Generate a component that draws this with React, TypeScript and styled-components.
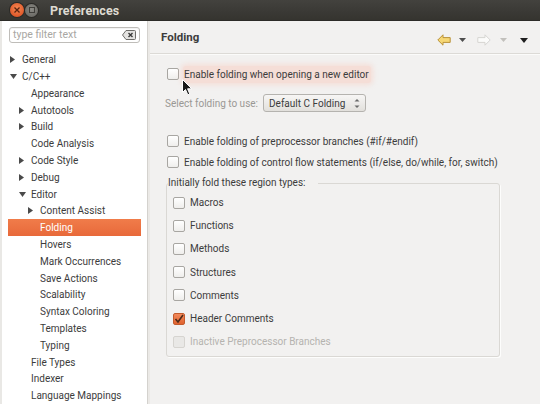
import React from "react";
import styled, { createGlobalStyle } from "styled-components";

const GlobalStyle = createGlobalStyle`
  html, body { margin: 0; padding: 0; }
  body {
    background: #f2f1f0;
    font-family: Roboto, "Liberation Sans", sans-serif;
    font-size: 10px;
    color: #3c3c3c;
  }
  * { box-sizing: border-box; }
`;

const Window = styled.div`
  width: 540px;
  height: 404px;
  display: flex;
  flex-direction: column;
  overflow: hidden;
  position: relative;
  background: #f2f1f0;
`;

const TitleBar = styled.div`
  height: 21px;
  flex: none;
  display: flex;
  align-items: center;
  padding-left: 10px;
  background: linear-gradient(#43423e, #3a3935 60%, #35342f);
  border-bottom: 1px solid #2c2b28;
`;

const CloseBtn = styled.div`
  width: 14px;
  height: 14px;
  border-radius: 50%;
  background: radial-gradient(circle at 50% 40%, #f88a55, #e0592a 70%, #b8431c);
  box-shadow: 0 0 0 1px #2a2926;
  display: flex;
  align-items: center;
  justify-content: center;
`;

const MinBtn = styled.div`
  width: 13px;
  height: 13px;
  border-radius: 50%;
  margin-left: 1px;
  background: radial-gradient(circle at 50% 40%, #8a8984, #6d6c67 70%, #5a5955);
  box-shadow: 0 0 0 1px #2a2926;
  display: flex;
  align-items: center;
  justify-content: center;
`;

const Title = styled.div`
  margin-left: 12px;
  font-weight: bold;
  font-size: 12.5px;
  color: #dfdbd2;
  letter-spacing: 0.1px;
`;

const Body = styled.div`
  flex: 1;
  display: flex;
  min-height: 0;
`;

const Sidebar = styled.div`
  width: 148px;
  flex: none;
  background: #fff;
  border-left: 2px solid #e9e8e5;
  border-right: 1px solid #d4d2ce;
  padding-top: 6px;
  display: flex;
  flex-direction: column;
`;

const Filter = styled.div`
  margin: 0 7px 0 7px;
  height: 18px;
  border: 1px solid #bfbdb9;
  border-radius: 3px;
  box-shadow: inset 0 1px 1px rgba(0, 0, 0, 0.06);
  display: flex;
  align-items: center;
  padding: 0 3px 0 3px;
  color: #a9a7a3;
  font-size: 10.5px;
`;

const FilterText = styled.span`
  flex: 1;
`;

const Tree = styled.div`
  margin-top: 8.6px;
  display: flex;
  flex-direction: column;
`;

const Row = styled.div<{ $level: number; $selected?: boolean }>`
  height: 16.8px;
  margin-left: 6px;
  width: 133px;
  display: flex;
  align-items: center;
  padding-left: ${(p) => 1 + p.$level * 9}px;
  white-space: nowrap;
  font-size: 10px;
  color: ${(p) => (p.$selected ? "#fff" : "#3c3c3c")};
  background: ${(p) =>
    p.$selected ? "linear-gradient(#f07c4a, #e8693a)" : "transparent"};
`;

const Expander = styled.span`
  width: 13px;
  flex: none;
  display: flex;
  align-items: center;
  padding-left: 1px;
`;

const Sash = styled.div`
  width: 2px;
  flex: none;
  background: #ebe9e6;
`;

const Main = styled.div`
  flex: 1;
  display: flex;
  flex-direction: column;
  position: relative;
`;

const Header = styled.div`
  height: 33px;
  flex: none;
  display: flex;
  align-items: center;
  padding-left: 11px;
  padding-right: 12px;
  border-bottom: 1px solid #dcdad6;
  box-shadow: 0 1px 0 #fbfbfa;
`;

const Heading = styled.div`
  font-weight: bold;
  font-size: 11.5px;
  color: #3c3c3c;
  flex: 1;
  margin-top: -1px;
`;

const Tools = styled.div`
  display: flex;
  align-items: center;
  margin-top: 6px;
`;

const ToolIcon = styled.span<{ $gap: number }>`
  display: flex;
  margin-left: ${(p) => p.$gap}px;
`;

const Content = styled.div`
  padding: 10px 0 0 17px;
  display: flex;
  flex-direction: column;
`;

const CheckRow = styled.div<{ $mt?: number }>`
  height: 20px;
  display: flex;
  align-items: center;
  margin-top: ${(p) => p.$mt ?? 0}px;
  font-size: 10px;
`;

const Label = styled.span<{ $disabled?: boolean; $focus?: boolean }>`
  margin-left: 5px;
  white-space: nowrap;
  color: ${(p) => (p.$disabled ? "#b5b3af" : "#3c3c3c")};
  ${(p) =>
    p.$focus
      ? `background: rgba(250, 195, 180, 0.42);
         box-shadow: 0 0 5px 2px rgba(250, 195, 180, 0.4);
         padding: 3px 2px 3px 1px;
         margin-left: 4px;
         border-radius: 3px;`
      : ""}
`;

const Box = styled.span<{ $checked?: boolean; $disabled?: boolean }>`
  width: 12px;
  height: 12px;
  flex: none;
  border-radius: 2px;
  display: flex;
  align-items: center;
  justify-content: center;
  border: 1px solid
    ${(p) => (p.$checked ? "#c35b2d" : p.$disabled ? "#d6d4d0" : "#a8a6a2")};
  background: ${(p) =>
    p.$checked
      ? "linear-gradient(#f28a5c, #e0622f)"
      : p.$disabled
      ? "#e9e8e6"
      : "linear-gradient(#ffffff, #efeeec)"};
`;

const SelectRow = styled.div`
  height: 18px;
  margin-top: 10px;
  margin-left: -2px;
  display: flex;
  align-items: center;
  font-size: 10px;
`;

const SelectLabel = styled.span`
  color: #9a9894;
  white-space: nowrap;
`;

const Combo = styled.div`
  margin-left: 5px;
  width: 103px;
  height: 18px;
  border: 1px solid #b5b3af;
  border-radius: 3px;
  background: linear-gradient(#f7f6f5, #e2e0dc);
  display: flex;
  align-items: center;
  padding: 0 5px;
  color: #3c3c3c;
`;

const ComboText = styled.span`
  flex: 1;
  white-space: nowrap;
`;

const Group = styled.fieldset`
  margin: 3px 0 0 -1px;
  width: 334px;
  padding: 0 0 3px 0;
  border: 1px solid #dad8d4;
  border-radius: 3px;
  box-shadow: 1px 1px 0 #fdfdfc;
  min-width: 0;
`;

const Legend = styled.legend`
  margin-left: 1px;
  padding: 0 12px 0 0;
  font-size: 10px;
  color: #3c3c3c;
  line-height: 16px;
`;

const GroupItem = styled.div`
  height: 23.2px;
  display: flex;
  align-items: center;
  padding-left: 6px;
  font-size: 10px;
`;

const Cursor = styled.svg`
  position: absolute;
  left: 32px;
  top: 58px;
`;

const Triangle = ({ dir, color = "#4a4a4a" }: { dir: "right" | "down"; color?: string }) =>
  dir === "right" ? (
    <svg width="5" height="7" viewBox="0 0 5 7">
      <path d="M0 0 L5 3.5 L0 7 Z" fill={color} />
    </svg>
  ) : (
    <svg width="7" height="5" viewBox="0 0 7 5">
      <path d="M0 0 L7 0 L3.5 5 Z" fill={color} />
    </svg>
  );

const Check = () => (
  <svg width="10" height="10" viewBox="0 0 10 10">
    <path d="M1.5 5 L4 8 L9 1" stroke="#4b2a19" strokeWidth="1.6" fill="none" />
  </svg>
);

type Node = { label: string; level: number; arrow?: "right" | "down"; selected?: boolean };

const tree: Node[] = [
  { label: "General", level: 0, arrow: "right" },
  { label: "C/C++", level: 0, arrow: "down" },
  { label: "Appearance", level: 1 },
  { label: "Autotools", level: 1, arrow: "right" },
  { label: "Build", level: 1, arrow: "right" },
  { label: "Code Analysis", level: 1 },
  { label: "Code Style", level: 1, arrow: "right" },
  { label: "Debug", level: 1, arrow: "right" },
  { label: "Editor", level: 1, arrow: "down" },
  { label: "Content Assist", level: 2, arrow: "right" },
  { label: "Folding", level: 2, selected: true },
  { label: "Hovers", level: 2 },
  { label: "Mark Occurrences", level: 2 },
  { label: "Save Actions", level: 2 },
  { label: "Scalability", level: 2 },
  { label: "Syntax Coloring", level: 2 },
  { label: "Templates", level: 2 },
  { label: "Typing", level: 2 },
  { label: "File Types", level: 1 },
  { label: "Indexer", level: 1 },
  { label: "Language Mappings", level: 1 },
];

const regions: { label: string; checked?: boolean; disabled?: boolean }[] = [
  { label: "Macros" },
  { label: "Functions" },
  { label: "Methods" },
  { label: "Structures" },
  { label: "Comments" },
  { label: "Header Comments", checked: true },
  { label: "Inactive Preprocessor Branches", disabled: true },
];

export default function App() {
  return (
    <Window>
      <GlobalStyle />
      <TitleBar>
        <CloseBtn>
          <svg width="6" height="6" viewBox="0 0 6 6">
            <path d="M0.5 0.5 L5.5 5.5 M5.5 0.5 L0.5 5.5" stroke="#5a2410" strokeWidth="1.3" />
          </svg>
        </CloseBtn>
        <MinBtn>
          <svg width="6" height="6" viewBox="0 0 6 6">
            <rect x="0.5" y="0.5" width="5" height="5" fill="none" stroke="#3f3e3a" strokeWidth="1" />
          </svg>
        </MinBtn>
        <Title>Preferences</Title>
      </TitleBar>
      <Body>
        <Sidebar>
          <Filter>
            <FilterText>type filter text</FilterText>
            <svg width="14" height="10" viewBox="0 0 14 10">
              <path
                d="M4 0.5 H12.5 Q13.5 0.5 13.5 1.5 V8.5 Q13.5 9.5 12.5 9.5 H4 L0.5 5 Z"
                fill="#e4e3e1"
                stroke="#6e6d6a"
              />
              <path d="M6.5 3 L10.5 7 M10.5 3 L6.5 7" stroke="#3a3a3a" strokeWidth="1.4" />
            </svg>
          </Filter>
          <Tree>
            {tree.map((n) => (
              <Row key={n.label} $level={n.level} $selected={n.selected}>
                <Expander>{n.arrow && <Triangle dir={n.arrow} />}</Expander>
                {n.label}
              </Row>
            ))}
          </Tree>
        </Sidebar>
        <Sash />
        <Main>
          <Header>
            <Heading>Folding</Heading>
            <Tools>
              <ToolIcon $gap={0}>
                <svg width="14" height="12" viewBox="0 0 14 12">
                  <path
                    d="M0.8 6 L6 0.8 V3.6 H13.2 V8.4 H6 V11.2 Z"
                    fill="#f6d774"
                    stroke="#b9923a"
                    strokeLinejoin="round"
                  />
                </svg>
              </ToolIcon>
              <ToolIcon $gap={8}>
                <svg width="7" height="4" viewBox="0 0 7 4">
                  <path d="M0 0 H7 L3.5 4 Z" fill="#4d4d4d" />
                </svg>
              </ToolIcon>
              <ToolIcon $gap={11}>
                <svg width="14" height="12" viewBox="0 0 14 12">
                  <path
                    d="M13.2 6 L8 0.8 V3.6 H0.8 V8.4 H8 V11.2 Z"
                    fill="#fbfbfa"
                    stroke="#d6d5d2"
                    strokeLinejoin="round"
                  />
                </svg>
              </ToolIcon>
              <ToolIcon $gap={9}>
                <svg width="7" height="4" viewBox="0 0 7 4">
                  <path d="M0 0 H7 L3.5 4 Z" fill="#c2c0bc" />
                </svg>
              </ToolIcon>
              <ToolIcon $gap={13}>
                <svg width="8" height="5" viewBox="0 0 8 5">
                  <path d="M0 0 H8 L4 5 Z" fill="#1e1e1e" />
                </svg>
              </ToolIcon>
            </Tools>
          </Header>
          <Content>
            <CheckRow>
              <Box />
              <Label $focus>Enable folding when opening a new editor</Label>
            </CheckRow>
            <SelectRow>
              <SelectLabel>Select folding to use:</SelectLabel>
              <Combo>
                <ComboText>Default C Folding</ComboText>
                <svg width="6" height="11" viewBox="0 0 6 11">
                  <path d="M0.5 3.5 L3 1 L5.5 3.5 Z" fill="#6a6a6a" />
                  <path d="M0.5 7.5 L3 10 L5.5 7.5 Z" fill="#6a6a6a" />
                </svg>
              </Combo>
            </SelectRow>
            <CheckRow $mt={19}>
              <Box />
              <Label>Enable folding of preprocessor branches (#if/#endif)</Label>
            </CheckRow>
            <CheckRow $mt={1}>
              <Box />
              <Label>Enable folding of control flow statements (if/else, do/while, for, switch)</Label>
            </CheckRow>
            <Group>
              <Legend>Initially fold these region types:</Legend>
              {regions.map((r) => (
                <GroupItem key={r.label}>
                  <Box $checked={r.checked} $disabled={r.disabled}>
                    {r.checked && <Check />}
                  </Box>
                  <Label $disabled={r.disabled}>{r.label}</Label>
                </GroupItem>
              ))}
            </Group>
          </Content>
          <Cursor width="11" height="17" viewBox="0 0 11 17">
            <path
              d="M0.5 0.5 V13.5 L3.5 10.5 L5.8 15.8 L7.8 15 L5.6 9.8 H9.8 Z"
              fill="#1a1a1a"
              stroke="#ffffff"
              strokeWidth="1"
              strokeLinejoin="round"
            />
          </Cursor>
        </Main>
      </Body>
    </Window>
  );
}
